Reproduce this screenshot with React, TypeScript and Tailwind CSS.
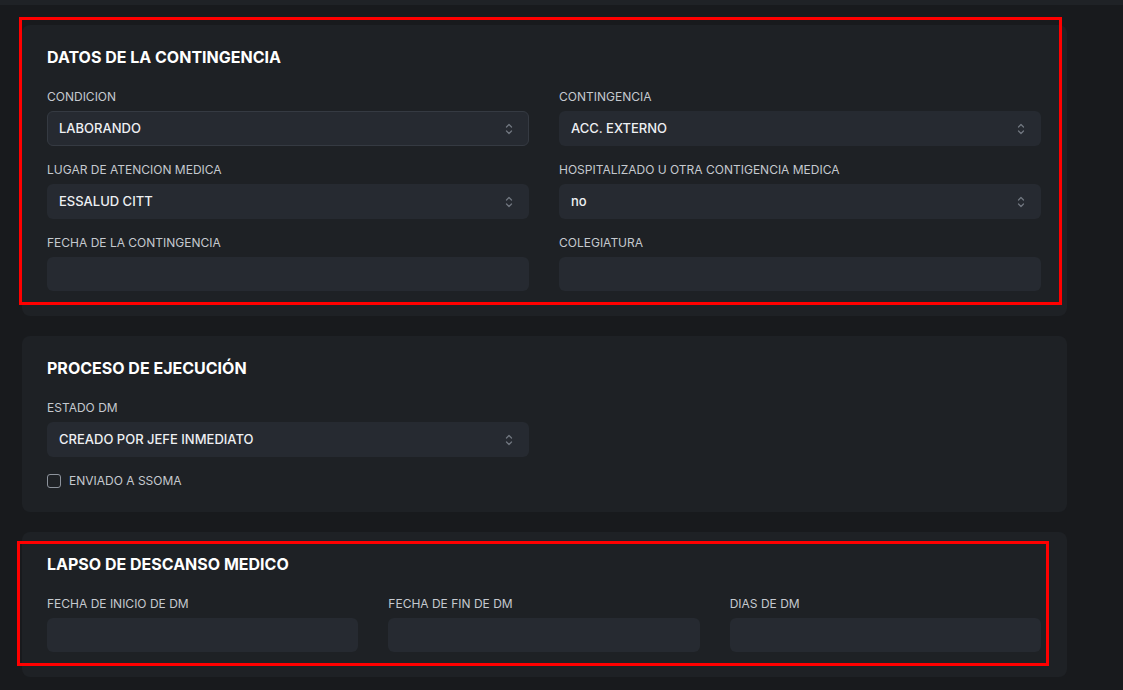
import React from 'react';

type Field = { label: string; value?: string; select?: boolean; focused?: boolean };

const UpDown: React.FC = () => (
  <svg width="8" height="14" viewBox="0 0 8 14" fill="none" stroke="#70767f" strokeWidth="1.3" strokeLinecap="round" strokeLinejoin="round">
    <path d="M1.5 5 L4 2.5 L6.5 5" />
    <path d="M1.5 9 L4 11.5 L6.5 9" />
  </svg>
);

const SelectBox: React.FC<{ value: string; focused?: boolean }> = ({ value, focused }) => (
  <div
    className={`flex h-[35px] items-center justify-between rounded-md bg-[#262a31] pl-3 pr-4 ${
      focused ? 'border border-[#353a42] pl-[11px] pr-[15px]' : ''
    }`}
  >
    <span className="text-[13px] font-medium text-[#eef0f3]">{value}</span>
    <UpDown />
  </div>
);

const TextBox: React.FC = () => <div className="h-[34px] rounded-md bg-[#262a31]" />;

const FieldBlock: React.FC<{ field: Field }> = ({ field }) => (
  <div className="flex flex-col">
    <label className="mb-1.5 text-xs leading-4 text-[#c5c9cf]">{field.label}</label>
    {field.select ? <SelectBox value={field.value ?? ''} focused={field.focused} /> : <TextBox />}
  </div>
);

const Card: React.FC<{ title: string; children: React.ReactNode; bottom?: string }> = ({ title, children, bottom = 'pb-[25px]' }) => (
  <section className={`rounded-lg bg-[#1e2125] pl-[25px] pr-[26px] pt-5 ${bottom}`}>
    <h2 className="mb-5 text-base font-bold leading-6 text-white">{title}</h2>
    {children}
  </section>
);

const contingencia: Field[] = [
  { label: 'CONDICION', value: 'LABORANDO', select: true, focused: true },
  { label: 'CONTINGENCIA', value: 'ACC. EXTERNO', select: true },
  { label: 'LUGAR DE ATENCION MEDICA', value: 'ESSALUD CITT', select: true },
  { label: 'HOSPITALIZADO U OTRA CONTIGENCIA MEDICA', value: 'no', select: true },
  { label: 'FECHA DE LA CONTINGENCIA' },
  { label: 'COLEGIATURA' },
];

const lapso: Field[] = [
  { label: 'FECHA DE INICIO DE DM' },
  { label: 'FECHA DE FIN DE DM' },
  { label: 'DIAS DE DM' },
];

export default function App() {
  return (
    <div className="relative min-h-[690px] bg-[#181a1d]" style={{ fontFamily: 'Inter, "Noto Sans", sans-serif' }}>
      <div className="h-[5px] bg-[#1f2226]" />
      <div className="box-content flex w-[1045px] flex-col gap-5 pl-[22px] pt-5">
        <Card title="DATOS DE LA CONTINGENCIA">
          <div className="grid grid-cols-2 gap-x-[30px] gap-y-4">
            {contingencia.map((f) => (
              <FieldBlock key={f.label} field={f} />
            ))}
          </div>
        </Card>

        <Card title="PROCESO DE EJECUCIÓN" bottom="pb-[23px]">
          <div className="grid grid-cols-2 gap-x-[30px]">
            <FieldBlock field={{ label: 'ESTADO DM', value: 'CREADO POR JEFE INMEDIATO', select: true }} />
          </div>
          <label className="mt-4 flex items-center gap-2 text-xs leading-4 text-[#c5c9cf]">
            <span className="h-[14px] w-[14px] rounded-[3px] border border-[#8d939c]" />
            ENVIADO A SSOMA
          </label>
        </Card>

        <Card title="LAPSO DE DESCANSO MEDICO">
          <div className="grid grid-cols-3 gap-x-[30px]">
            {lapso.map((f) => (
              <FieldBlock key={f.label} field={f} />
            ))}
          </div>
        </Card>
      </div>

      {/* annotation boxes */}
      <div className="pointer-events-none absolute left-[19px] top-[17px] h-[288px] w-[1043px] border-[3px] border-[#ff0000]" />
      <div className="pointer-events-none absolute left-[17px] top-[541px] h-[125px] w-[1032px] border-[3px] border-[#ff0000]" />
    </div>
  );
}
